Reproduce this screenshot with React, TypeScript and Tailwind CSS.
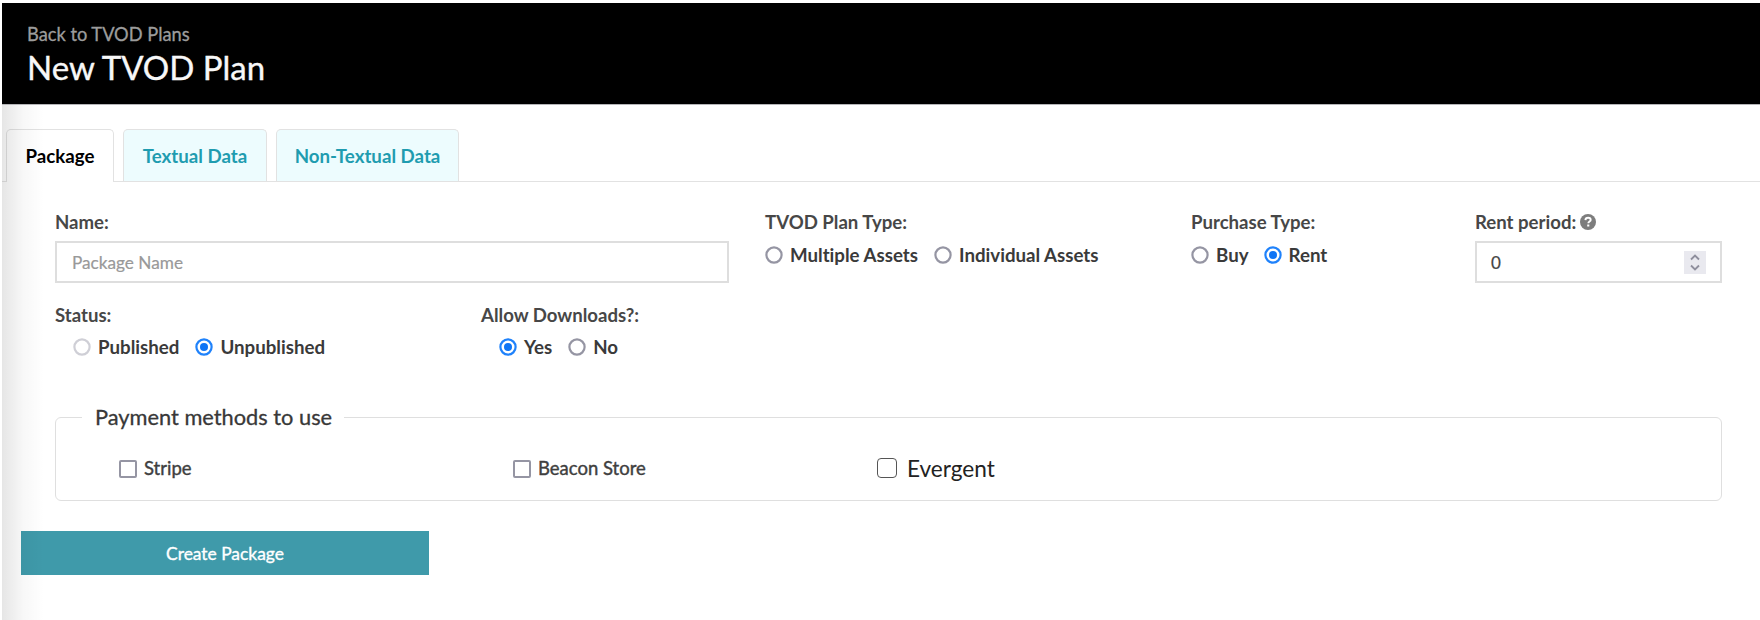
import type { ReactNode } from "react";

function Radio({ checked = false, muted = false }: { checked?: boolean; muted?: boolean }) {
  return (
    <svg viewBox="0 0 18 18" className="size-[18px] shrink-0" role="radio" aria-checked={checked}>
      <circle
        cx="9"
        cy="9"
        r="7.6"
        fill="#fff"
        strokeWidth="2.2"
        stroke={checked ? "#1f82fb" : muted ? "#cfcfd6" : "#9595a3"}
      />
      {checked && <circle cx="9" cy="9" r="4" fill="#0f75f5" />}
    </svg>
  );
}

function Option({ label, checked, muted }: { label: string; checked?: boolean; muted?: boolean }) {
  return (
    <label className="flex items-center gap-[7px] whitespace-nowrap text-[18.7px] leading-[22px] font-bold text-[#3a3a3a] [font-variant-ligatures:none]">
      <Radio checked={checked} muted={muted} />
      <span>{label}</span>
    </label>
  );
}

function Label({ children }: { children: ReactNode }) {
  return <div className="flex h-[22px] items-center whitespace-nowrap text-[18.6px] leading-[22px] font-bold text-[#474747]">{children}</div>;
}

function HelpIcon() {
  return (
    <svg viewBox="0 0 16 16" className="ml-1 size-4">
      <circle cx="8" cy="8" r="8" fill="#7d7d7d" />
      <path d="M5.4 6.1C5.5 4.6 6.6 3.8 8.1 3.8c1.5 0 2.6.8 2.6 2.1 0 1.6-2.4 1.7-2.4 3.3" fill="none" stroke="#fff" strokeWidth="1.9" />
      <rect x="7.2" y="10.5" width="2.1" height="2" fill="#fff" />
    </svg>
  );
}

function Spinner() {
  return (
    <div className="flex h-[23px] w-[22px] items-center justify-center bg-[#e9e9ef]">
      <svg viewBox="0 0 22 23" className="h-[23px] w-[22px]" fill="none" stroke="#8f8f9d" strokeWidth="1.8">
        <path d="M7 8.5l4-4 4 4M7 14.5l4 4 4-4" />
      </svg>
    </div>
  );
}

export default function App() {
  return (
    <div className="h-[620px] w-[1760px] overflow-hidden bg-white pt-[3px] pl-[2px] font-['Lato',sans-serif]">
      <header className="h-[102px] border-b border-[#b5b5b8] bg-black pt-[20px] pl-[25px]">
        <div className="text-[18.25px] leading-[22px] text-[#9c9c9c] [-webkit-text-stroke:0.3px]">Back to TVOD Plans</div>
        <h1 className="mt-[2px] text-[33px] leading-[40px] text-[#f8f8f8] [-webkit-text-stroke:0.35px]">New TVOD Plan</h1>
      </header>

      <main className="relative h-[515px]">
        <nav className="flex h-[77px] items-end text-[18.7px] font-bold">
          <div className="h-[1.5px] w-[4px] bg-[#e4e4e4]" />
          <div className="flex h-[53px] w-[108px] items-center justify-center rounded-t-[5px] border border-b-0 border-[#e2e2e2] bg-white text-black">
            Package
          </div>
          <div className="flex h-[53px] flex-1 gap-[9px] border-b border-[#e2e2e2] pl-[9px] text-[#1f9cb0]">
            <div className="flex h-[52px] w-[144px] items-center justify-center rounded-t-[5px] border border-b-0 border-[#e2e2e2] bg-[#edfcfe] pt-px">
              Textual Data
            </div>
            <div className="flex h-[52px] w-[183px] items-center justify-center rounded-t-[5px] border border-b-0 border-[#e2e2e2] bg-[#edfcfe] pt-px">
              Non-Textual Data
            </div>
          </div>
        </nav>

        <section className="flex pt-[29px] pl-[53px]">
          <div className="w-[710px]">
            <Label>Name:</Label>
            <div className="mt-[8px] flex h-[42px] w-[674px] items-center border-2 border-[#dedede] pt-px pr-[14px] pl-[15px] text-[17.2px] text-[#999] [-webkit-text-stroke:0.2px]">
              Package Name
            </div>
          </div>
          <div className="w-[426px]">
            <Label>TVOD Plan Type:</Label>
            <div className="mt-[11px] flex gap-4">
              <Option label="Multiple Assets" />
              <Option label="Individual Assets" />
            </div>
          </div>
          <div className="w-[284px]">
            <Label>Purchase Type:</Label>
            <div className="mt-[11px] flex gap-[15px]">
              <Option label="Buy" />
              <Option label="Rent" checked />
            </div>
          </div>
          <div>
            <Label>
              Rent period:
              <HelpIcon />
            </Label>
            <div className="mt-[8px] flex h-[42px] w-[247px] items-center justify-between border-2 border-[#dedede] px-[14px] text-[17px] text-[#444] [-webkit-text-stroke:0.2px]">
              <span className="pt-px">0</span>
              <Spinner />
            </div>
          </div>
        </section>

        <section className="flex pt-[21px] pl-[53px]">
          <div className="w-[426px]">
            <Label>Status:</Label>
            <div className="mt-[10px] flex gap-4 pl-[18px]">
              <Option label="Published" muted />
              <Option label="Unpublished" checked />
            </div>
          </div>
          <div>
            <Label>Allow Downloads?:</Label>
            <div className="mt-[10px] flex gap-4 pl-[18px]">
              <Option label="Yes" checked />
              <Option label="No" />
            </div>
          </div>
        </section>

        <fieldset className="mt-[46px] ml-[53px] h-[97px] w-[1667px] rounded-[6px] border border-[#dfdfdf] pl-[26px]">
          <legend className="h-[26px] w-[262px] pl-[13px] text-[21.8px] leading-[26px] whitespace-nowrap text-[#383838] [-webkit-text-stroke:0.3px]">
            Payment methods to use
          </legend>
          <div className="mt-[13px] flex h-[50px] items-center pl-[37px] text-[18.5px] text-[#3f3f3f]">
            <label className="flex w-[394px] items-center gap-[7px] pt-[2px] [-webkit-text-stroke:0.4px]">
              <span className="size-[18px] rounded-[2px] border-[2.5px] border-[#9595a3] bg-white" />
              Stripe
            </label>
            <label className="flex w-[364px] items-center gap-[7px] pt-[2px] [-webkit-text-stroke:0.4px]">
              <span className="size-[18px] rounded-[2px] border-[2.5px] border-[#9595a3] bg-white" />
              Beacon Store
            </label>
            <label className="flex items-center gap-[10px] text-[22.6px] text-[#222]">
              <span className="size-[20px] rounded-[4px] border border-[#555] bg-white" />
              <span className="pt-px">Evergent</span>
            </label>
          </div>
        </fieldset>

        <button type="button" className="mt-[30px] ml-[19px] block h-[44px] w-[408px] bg-[#3f9aaa] pt-[2px] text-[17.4px] text-white [-webkit-text-stroke:0.35px]">
          Create Package
        </button>

        <div className="pointer-events-none absolute top-0 left-0 h-full w-[42px] bg-linear-to-r from-black/10 via-black/3 to-transparent" />
      </main>
    </div>
  );
}
